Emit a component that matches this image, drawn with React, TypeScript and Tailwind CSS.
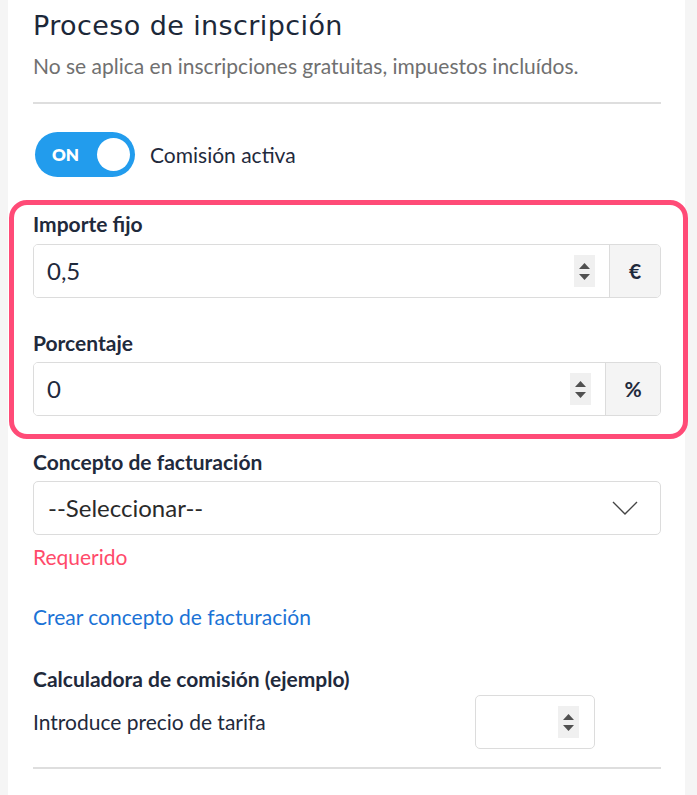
function Spinner({ className = '' }: { className?: string }) {
  return (
    <div className={`flex flex-col items-center justify-center gap-[5px] bg-[#f0f0f0] w-[21px] h-[32px] ${className}`}>
      <svg width="11" height="6" viewBox="0 0 11 6"><path d="M5.5 0 L11 6 L0 6 Z" fill="#505050" /></svg>
      <svg width="11" height="6" viewBox="0 0 11 6"><path d="M0 0 L11 0 L5.5 6 Z" fill="#505050" /></svg>
    </div>
  );
}

function AddonInput({ value, addon, addonW }: { value: string; addon: string; addonW: string }) {
  return (
    <div className="flex h-[54px] border border-[#dcdcdc] rounded-[5px] overflow-hidden">
      <div className="flex-1 flex items-center pl-[13px] pr-[14px] bg-white">
        <span className="flex-1 text-[24px] text-[#1f2a3c]">{value}</span>
        <Spinner />
      </div>
      <div className={`${addonW} flex items-center justify-center bg-[#f4f4f4] border-l border-[#dcdcdc] text-[21px] font-bold text-[#1f2a3c]`}>
        {addon}
      </div>
    </div>
  );
}

export default function App() {
  return (
    <main className="min-h-screen bg-[#f5f5f5]" style={{ fontFamily: 'Lato, "Open Sans", sans-serif' }}>
      <section className="ml-[8px] w-[677px] min-h-[795px] bg-white pl-[25px] pr-[24px] text-[#1f2a3c]">
        <h1
          className="pt-[9px] text-[27px] leading-[34px] font-normal tracking-[0.4px] text-[#1c2839]"
          style={{ fontFamily: '"DejaVu Sans", sans-serif' }}
        >
          Proceso de inscripción
        </h1>
        <p className="mt-[11px] text-[21px] leading-[24px] text-[#707070]">
          No se aplica en inscripciones gratuitas, impuestos incluídos.
        </p>
        <div className="mt-[24px] h-[2px] bg-[#dedede]" />

        <div className="mt-[28px] flex items-center gap-[15px]">
          <div className="ml-[2px] w-[100px] h-[45px] rounded-full bg-[#229ced] flex items-center justify-between pl-[17px] pr-[5px]">
            <span className="text-white font-extrabold text-[17px]">ON</span>
            <span className="w-[33px] h-[33px] rounded-full bg-white" />
          </div>
          <span className="text-[21px]">Comisión activa</span>
        </div>

        <div className="mt-[23px] -ml-[24px] -mr-[27px] border-[5px] border-[#ff4b77] rounded-[18px] pl-[19px] pr-[22px] pt-[6px] pb-[18px]">
          <label className="block text-[21px] font-bold leading-[26px]">Importe fijo</label>
          <div className="mt-[7px]">
            <AddonInput value="0,5" addon="€" addonW="w-[51px]" />
          </div>
          <label className="mt-[32px] block text-[21px] font-bold leading-[26px]">Porcentaje</label>
          <div className="mt-[6px]">
            <AddonInput value="0" addon="%" addonW="w-[55px]" />
          </div>
        </div>

        <label className="mt-[10px] block text-[21px] font-bold leading-[26px]">Concepto de facturación</label>
        <div className="mt-[6px] h-[54px] border border-[#dcdcdc] rounded-[5px] flex items-center pl-[14px] pr-[22px]">
          <span className="flex-1 text-[24px] text-[#2a2a2a]">--Seleccionar--</span>
          <svg width="26" height="14" viewBox="0 0 26 14" fill="none">
            <polyline points="1,1 13,13 25,1" stroke="#444" strokeWidth="1.4" />
          </svg>
        </div>
        <p className="mt-[9px] text-[21px] leading-[26px] text-[#ff4a6a]">Requerido</p>

        <a href="#" className="mt-[34px] block text-[21px] leading-[26px] text-[#1b73d6]">
          Crear concepto de facturación
        </a>

        <p className="mt-[36px] text-[21px] font-bold leading-[26px]">Calculadora de comisión (ejemplo)</p>
        <div className="mt-[3px] flex items-center">
          <span className="flex-1 text-[21px]">Introduce precio de tarifa</span>
          <div className="mr-[66px] w-[120px] h-[54px] border border-[#dcdcdc] rounded-[5px] flex items-center justify-end pr-[15px]">
            <Spinner />
          </div>
        </div>
        <div className="mt-[18px] h-[2px] bg-[#dedede]" />
      </section>
    </main>
  );
}
